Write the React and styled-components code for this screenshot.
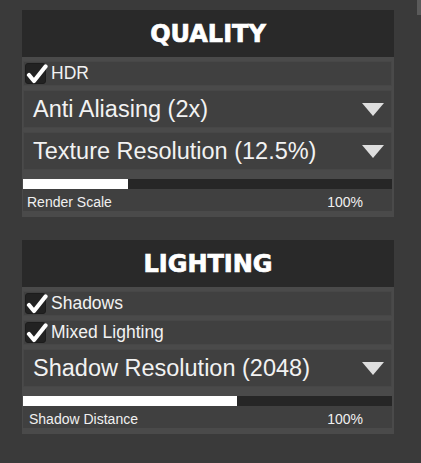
import React from "react";
import styled, { createGlobalStyle } from "styled-components";

const Global = createGlobalStyle`
  html, body { margin: 0; padding: 0; background: #3a3a3a; }
  body { width: 421px; height: 463px; overflow: hidden; font-family: "Liberation Sans", Arial, sans-serif; }
`;

const Page = styled.div`
  display: flex;
  flex-direction: column;
  gap: 23px;
  padding: 10px 0 0 22px;
`;

const Scroll = styled.div`
  position: fixed;
  top: 0;
  right: 0;
  width: 4px;
  height: 15px;
  background: #5a5a5a;
`;

const Panel = styled.section`
  width: 372px;
  display: flex;
  flex-direction: column;
`;

const Header = styled.h2`
  margin: 0;
  height: 47px;
  background: #292929;
  color: #ffffff;
  font-family: "DejaVu Sans", sans-serif;
  font-weight: bold;
  font-size: 24px;
  -webkit-text-stroke: 0.7px #ffffff;
  display: flex;
  align-items: center;
  justify-content: center;
`;

const Body = styled.div`
  background: #4a4a4a;
  padding: 4px 2px 6px 1px;
  display: flex;
  flex-direction: column;
  gap: 4px;
`;

const Row = styled.div`
  background: #404040;
  border: 1px solid #474747;
  box-sizing: border-box;
  display: flex;
  align-items: center;
  color: #f2f2f2;
  font-family: "Liberation Sans", Arial, sans-serif;
`;

const CheckRow = styled(Row)`
  height: 25px;
  padding-left: 1px;
  gap: 5px;
  font-size: 17.5px;
`;

const Box = styled.div`
  position: relative;
  display: block;
  width: 21px;
  height: 21px;
  min-width: 21px;
  box-sizing: border-box;
  border: 1px solid #1c1c1c;
  border-radius: 3px;
  background-color: #222222;
  flex: 0 0 21px;
`;

const Tick = styled.svg`
  position: absolute;
  left: 0;
  top: -1px;
  display: block;
`;

const Select = styled(Row)`
  height: 38px;
  padding: 0 7px 0 9px;
  justify-content: space-between;
  font-size: 23.5px;
`;

const Arrow = styled.span`
  width: 0;
  height: 0;
  border-left: 11.5px solid transparent;
  border-right: 11.5px solid transparent;
  border-top: 13px solid #dedede;
`;

const SliderGroup = styled.div`
  margin-top: 5px;
  display: flex;
  flex-direction: column;
`;

const Track = styled.div`
  height: 10px;
  background: #262626;
`;

const Fill = styled.div`
  height: 100%;
  background: #ffffff;
`;

const Label = styled.div`
  height: 22px;
  box-sizing: border-box;
  padding: 3px 29px 0 ${(p) => p.$indent}px;
  background: #404040;
  display: flex;
  align-items: center;
  justify-content: space-between;
  color: #f0f0f0;
  font-size: 14px;
  font-family: "Liberation Sans", Arial, sans-serif;
`;

function Check({ label }) {
  return (
    <CheckRow>
      <Box>
        <Tick width="22" height="22" viewBox="0 0 22 22">
          <polyline
            points="3,12 8,18 19.5,3.5"
            fill="none"
            stroke="#ffffff"
            strokeWidth="4.2"
            strokeLinecap="round"
            strokeLinejoin="round"
          />
        </Tick>
      </Box>
      {label}
    </CheckRow>
  );
}

function Dropdown({ label }) {
  return (
    <Select>
      {label}
      <Arrow />
    </Select>
  );
}

function Slider({ label, value, fill, indent }) {
  return (
    <SliderGroup>
      <Track>
        <Fill style={{ width: `${fill}%` }} />
      </Track>
      <Label $indent={indent}>
        <span>{label}</span>
        <span>{value}</span>
      </Label>
    </SliderGroup>
  );
}

export default function App() {
  return (
    <>
      <Global />
      <Scroll />
      <Page>
        <Panel>
          <Header>QUALITY</Header>
          <Body>
            <Check label="HDR" />
            <Dropdown label="Anti Aliasing (2x)" />
            <Dropdown label="Texture Resolution (12.5%)" />
            <Slider label="Render Scale" value="100%" fill={28.5} indent={4} />
          </Body>
        </Panel>
        <Panel>
          <Header>LIGHTING</Header>
          <Body>
            <Check label="Shadows" />
            <Check label="Mixed Lighting" />
            <Dropdown label="Shadow Resolution (2048)" />
            <Slider label="Shadow Distance" value="100%" fill={58} indent={6} />
          </Body>
        </Panel>
      </Page>
    </>
  );
}
